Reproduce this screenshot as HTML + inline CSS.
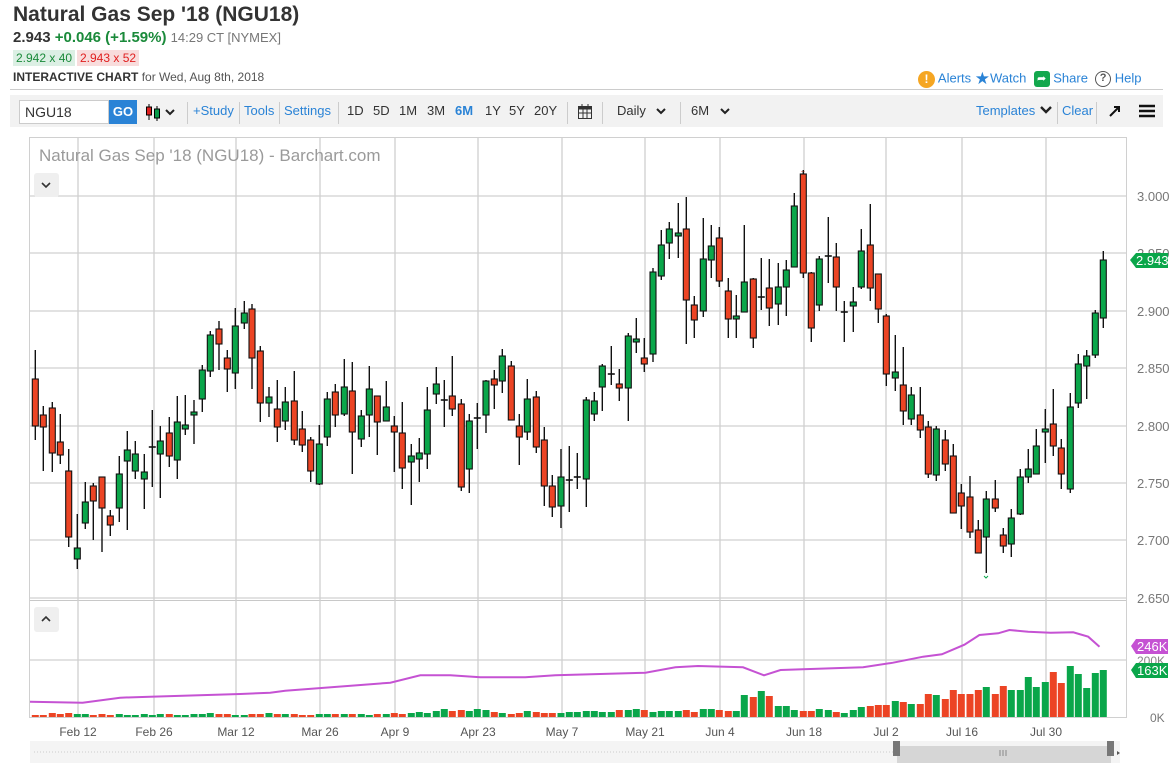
<!DOCTYPE html>
<html><head><meta charset="utf-8">
<style>
*{margin:0;padding:0;box-sizing:border-box}
body{width:1173px;height:768px;background:#fff;font-family:"Liberation Sans",sans-serif;position:relative;overflow:hidden;color:#333}
.a{position:absolute;white-space:nowrap}
.blue{color:#2a83d6}
.p{position:absolute;top:103px;font-size:13px}
</style></head><body>
<div class="a" style="left:13px;top:3px;font-size:21px;font-weight:bold;color:#333">Natural Gas Sep '18 (NGU18)</div>
<div class="a" style="left:13px;top:29px;font-size:15px"><b>2.943</b> <b style="color:#1a8a3a">+0.046 (+1.59%)</b> <span style="font-size:13px;color:#777">14:29 CT [NYMEX]</span></div>
<div class="a" style="left:13px;top:50px;font-size:12px;background:#dcefe4;color:#1a8a3a;padding:1px 3px">2.942 x 40</div>
<div class="a" style="left:77px;top:50px;font-size:12px;background:#f8dcdc;color:#e02020;padding:1px 3px">2.943 x 52</div>
<div class="a" style="left:13px;top:70px;font-size:12px"><b>INTERACTIVE CHART</b> <span style="color:#555">for Wed, Aug 8th, 2018</span></div>
<div class="a" style="left:918px;top:69px;font-size:13px">
<span style="display:inline-block;width:17px;height:17px;border-radius:50%;background:#f5a623;color:#fff;text-align:center;font-weight:bold;font-size:12px;line-height:17px;vertical-align:middle">!</span> <span class="blue">Alerts</span>
<span style="color:#2a83d6;font-size:17px;vertical-align:middle">★</span><span class="blue">Watch</span>
&nbsp;<span style="display:inline-block;width:16px;height:16px;border-radius:3px;background:#13a84d;color:#fff;text-align:center;font-size:11px;line-height:16px;vertical-align:middle">➦</span> <span class="blue">Share</span>
&nbsp;<span style="display:inline-block;width:16px;height:16px;border-radius:50%;border:1.5px solid #555;color:#555;text-align:center;font-size:11px;line-height:13px;vertical-align:middle;font-weight:bold">?</span> <span class="blue">Help</span></div>
<div class="a" style="left:10px;top:89px;width:1153px;height:1px;background:#ccc"></div>
<div class="a" style="left:10px;top:95px;width:1153px;height:32px;background:#f2f2f2"></div>
<div class="a" style="left:19px;top:100px;width:90px;height:24px;background:#fff;border:1px solid #ccc;font-size:14px;padding:3px 5px">NGU18</div>
<div class="a" style="left:109px;top:100px;width:28px;height:24px;background:#2a83d6;color:#fff;font-weight:bold;font-size:13px;text-align:center;line-height:24px">GO</div>
<svg class="a" style="left:144px;top:102px" width="34" height="20"><line x1="5" y1="2" x2="5" y2="18" stroke="#000"/><rect x="2.5" y="5" width="5" height="8" fill="#e02020" stroke="#000"/><line x1="13" y1="4" x2="13" y2="19" stroke="#000"/><rect x="10.5" y="7" width="5" height="9" fill="#0a9a4a" stroke="#000"/><path d="M22 8l4 4 4-4" fill="none" stroke="#222" stroke-width="2"/></svg>
<div class="a" style="left:187px;top:102px;width:1px;height:22px;background:#ccc"></div>
<div class="a blue" style="left:193px;top:103px;font-size:13px">+Study</div>
<div class="a" style="left:239px;top:102px;width:1px;height:22px;background:#ccc"></div>
<div class="a blue" style="left:244px;top:103px;font-size:13px">Tools</div>
<div class="a" style="left:279px;top:102px;width:1px;height:22px;background:#ccc"></div>
<div class="a blue" style="left:284px;top:103px;font-size:13px">Settings</div>
<div class="a" style="left:338px;top:102px;width:1px;height:22px;background:#ccc"></div>
<span class="p" style="left:347px">1D</span><span class="p" style="left:373px">5D</span><span class="p" style="left:399px">1M</span><span class="p" style="left:427px">3M</span><b class="p blue" style="left:455px">6M</b><span class="p" style="left:485px">1Y</span><span class="p" style="left:509px">5Y</span><span class="p" style="left:534px">20Y</span>
<div class="a" style="left:567px;top:102px;width:1px;height:22px;background:#ccc"></div>
<svg class="a" style="left:577px;top:103px" width="16" height="17"><rect x="1.5" y="3.5" width="13" height="12" fill="none" stroke="#333"/><rect x="1.5" y="3.5" width="13" height="3" fill="#333"/><path d="M5 1v4M11 1v4M1.5 10h13M6 6.5v9M10 6.5v9" stroke="#333"/></svg>
<div class="a" style="left:602px;top:102px;width:1px;height:22px;background:#ccc"></div>
<div class="a" style="left:617px;top:103px;font-size:13px">Daily</div>
<svg class="a" style="left:655px;top:106px" width="12" height="10"><path d="M2 3l4 4 4-4" fill="none" stroke="#222" stroke-width="2"/></svg>
<div class="a" style="left:680px;top:102px;width:1px;height:22px;background:#ccc"></div>
<div class="a" style="left:691px;top:103px;font-size:13px">6M</div>
<svg class="a" style="left:719px;top:106px" width="12" height="10"><path d="M2 3l4 4 4-4" fill="none" stroke="#222" stroke-width="2"/></svg>
<div class="a blue" style="left:976px;top:103px;font-size:13px">Templates</div>
<svg class="a" style="left:1039px;top:105px" width="14" height="10"><path d="M2 2l5 5 5-5" fill="none" stroke="#222" stroke-width="2.4"/></svg>
<div class="a" style="left:1057px;top:102px;width:1px;height:22px;background:#ccc"></div>
<div class="a blue" style="left:1062px;top:103px;font-size:13px">Clear</div>
<div class="a" style="left:1096px;top:102px;width:1px;height:22px;background:#ccc"></div>
<svg class="a" style="left:1107px;top:103px" width="16" height="16"><path d="M3 13L12 4M7 4h5v5" fill="none" stroke="#111" stroke-width="2"/></svg>
<svg class="a" style="left:1138px;top:103px" width="18" height="16"><path d="M1 3h16M1 8h16M1 13h16" stroke="#111" stroke-width="2.4"/></svg>

<svg id="ch" class="a" style="left:0;top:0" width="1173" height="768"></svg>
<div class="a" style="left:39px;top:146px;font-size:17px;color:#9a9a9a">Natural Gas Sep '18 (NGU18) - Barchart.com</div>
<div class="a" style="left:34px;top:173px;width:25px;height:24px;background:#efefef;border-radius:3px"></div>
<svg class="a" style="left:40px;top:180px" width="12" height="10"><path d="M2 3l4 4 4-4" fill="none" stroke="#333" stroke-width="1.6"/></svg>
<div class="a" style="left:34px;top:607px;width:25px;height:25px;background:#efefef;border-radius:3px"></div>
<svg class="a" style="left:40px;top:614px" width="12" height="10"><path d="M2 7l4-4 4 4" fill="none" stroke="#333" stroke-width="1.6"/></svg>
<script>
var C=[[35.3,350,379,426,440,0],[43.3,406,415,427,471,0],[52.3,402,408,453,472,0],[60.3,414,442,455,464,0],[68.7,449,471,537,547,0],[77.3,514,548,559,569,1],[85.3,482,502,523,529,1],[93.3,483,486,501,540,0],[102,477,477,508,552,0],[110.3,510,516,525,536,0],[119.3,456,474,508,522,1],[127.3,431,450,461,530,1],[135.3,441,454,471,479,1],[144.3,454,472,479,509,1],[152.3,410,447,447,487,2],[160.3,426,441,454,498,1],[169.3,417,433,456,467,0],[177.3,396,422,460,479,1],[185.3,395,425,429,435,1],[194,400,412,415,444,1],[202.3,365,370,399,412,1],[210.3,331,335,371,377,1],[219,321,329,344,370,0],[227.3,350,358,369,392,0],[235.3,308,326,373,389,1],[244.3,301,313,323,329,1],[252,304,309,358,389,0],[260.3,346,351,403,422,0],[269,387,397,403,417,1],[277.3,380,409,427,442,0],[285.3,387,402,421,430,1],[294.3,371,401,440,445,0],[302.3,411,429,445,452,0],[310.7,437,440,471,482,0],[319.3,425,444,484,485,1],[327.3,392,399,437,446,1],[335.3,384,392,415,427,0],[344.3,359,387,414,416,1],[352.3,362,391,432,474,0],[361.3,410,416,439,447,1],[369.3,366,389,415,437,1],[377.3,396,396,422,455,0],[386.3,381,407,421,421,1],[394.3,416,426,432,472,0],[402.3,402,433,468,489,0],[411.3,444,456,462,505,1],[419.3,438,453,459,482,1],[427.3,387,410,454,469,1],[436.3,367,384,394,404,1],[444.3,380,400,400,427,2],[452.3,356,396,409,416,0],[461.3,399,404,487,491,0],[469.3,414,421,469,493,1],[477.3,403,418,418,449,2],[486,380,381,415,433,1],[494.3,370,379,385,409,0],[502.3,349,356,381,393,1],[511.3,361,366,420,420,0],[519.3,414,426,437,465,0],[527.3,379,399,432,440,1],[536.3,391,397,447,453,0],[544.3,427,440,486,506,0],[552.3,475,486,507,517,0],[561,449,477,506,528,1],[569.3,446,480,480,512,2],[577.3,453,477,477,489,2],[586.3,397,400,479,507,1],[594.3,392,401,414,421,1],[602.3,364,366,387,411,1],[611.3,346,374,374,385,2],[619.3,369,384,388,401,0],[628.3,333,336,388,421,1],[636.3,318,339,342,353,1],[644.3,338,358,364,372,0],[653,268,272,354,362,1],[661.3,230,245,276,280,1],[669.3,222,229,243,259,1],[678.3,203,233,236,258,1],[686.3,197,229,300,344,0],[694.3,296,305,320,338,0],[703.3,218,259,311,317,1],[711.3,225,246,260,278,1],[719.3,227,238,281,287,0],[728.3,278,291,319,338,0],[736.3,295,316,319,338,1],[744.3,225,282,312,312,1],[753.3,278,279,338,348,0],[761.3,258,297,297,310,2],[769.3,259,288,308,326,0],[778.3,263,287,304,325,1],[786.3,260,270,287,316,1],[794.3,193,206,267,267,1],[803.3,170,174,273,278,0],[811.3,272,273,328,342,0],[819.3,256,259,305,311,1],[828.3,217,256,256,283,2],[836.3,243,257,287,311,0],[844.3,301,312,312,342,2],[853.3,287,302,306,332,1],[861.3,229,251,287,289,1],[870.3,204,245,288,301,0],[878.3,274,274,309,323,0],[886.3,314,316,374,386,0],[895.3,335,372,378,391,1],[903.3,347,385,411,425,0],[911.3,387,395,419,425,1],[920.3,387,415,430,438,0],[928.3,421,427,474,478,0],[936.3,426,429,475,481,1],[945.3,430,440,464,471,0],[953.3,444,456,513,513,0],[961.3,484,493,506,529,0],[970,476,497,532,538,0],[978.3,520,530,553,553,0],[986.3,491,499,537,573,1],[995.3,480,499,508,512,0],[1003.3,528,535,546,553,0],[1011.3,509,518,544,557,1],[1020.3,469,477,514,515,1],[1028.3,449,469,477,483,1],[1036.3,429,446,474,474,1],[1045.3,409,429,432,463,1],[1053.3,389,424,446,456,0],[1061.3,439,448,474,489,0],[1070.3,393,407,489,493,1],[1078.3,354,364,403,408,1],[1086.7,350,356,366,399,1],[1095.3,310,313,355,358,1],[1103.3,251,260,318,328,1]];
var V=[2,2,4,3,4,3,3,2,3,2,3,2,2,3,2,3,3,2,2,3,3,4,3,3,2,2,3,3,4,3,3,3,2,2,3,3,3,3,3,3,2,3,3,4,3,4,5,4,6,8,6,7,6,8,7,5,4,3,4,6,5,4,4,4,5,5,6,6,5,5,7,7,8,7,5,6,6,6,7,5,8,8,7,6,6,22,20,26,21,11,11,7,6,6,8,7,5,4,7,10,11,12,12,16,15,13,13,23,22,18,27,23,23,27,30,23,31,27,27,40,30,35,45,34,51,43,29,44,47];
var R='#ec4424',G='#0aa64a',s='';
s+='<rect x="29.5" y="137.5" width="1097" height="580" fill="none" stroke="#d0d0d0"/>';
[196,253,311,368,426,483,540,598].forEach(function(y){s+='<line x1="30" x2="1126" y1="'+y+'" y2="'+y+'" stroke="#d0d0d0" stroke-width="1.3"/>'});
s+='<line x1="30" x2="1126" y1="600.5" y2="600.5" stroke="#c8c8c8"/><line x1="30" x2="1126" y1="660" y2="660" stroke="#d0d0d0" stroke-width="1.3"/>';
var D=[[78,'Feb 12'],[154,'Feb 26'],[236,'Mar 12'],[320,'Mar 26'],[395,'Apr 9'],[478,'Apr 23'],[562,'May 7'],[645,'May 21'],[720,'Jun 4'],[804,'Jun 18'],[886,'Jul 2'],[962,'Jul 16'],[1046,'Jul 30']];
D.forEach(function(d){s+='<line x1="'+d[0]+'" x2="'+d[0]+'" y1="138" y2="717" stroke="#d0d0d0" stroke-width="1.3"/><text x="'+d[0]+'" y="736" font-size="12" fill="#555" text-anchor="middle" font-family="Liberation Sans">'+d[1]+'</text>'});
[['3.000',196],['2.950',253],['2.900',311],['2.850',368],['2.800',426],['2.750',483],['2.700',540],['2.650',598]].forEach(function(p){s+='<text x="1137" y="'+(p[1]+5)+'" font-size="13" fill="#777" font-family="Liberation Sans">'+p[0]+'</text>'});
C.forEach(function(c,i){var x=c[0],col=c[5]==0?R:G;var h=V[i]||3;s+='<rect x="'+(x-3.5)+'" y="'+(717-h)+'" width="7" height="'+h+'" fill="'+col+'"/>';});
C.forEach(function(c){var x=c[0];s+='<line x1="'+x+'" x2="'+x+'" y1="'+c[1]+'" y2="'+c[4]+'" stroke="#111" stroke-width="1.4"/>';if(c[5]==2){s+='<line x1="'+(x-3.5)+'" x2="'+(x+3.5)+'" y1="'+c[2]+'" y2="'+c[2]+'" stroke="#111" stroke-width="1.6"/>'}else{s+='<rect x="'+(x-3)+'" y="'+c[2]+'" width="6" height="'+Math.max(2,c[3]-c[2])+'" fill="'+(c[5]?G:R)+'" stroke="#111" stroke-width="1.1"/>'}});
var M=[[40,305],[110,308],[160,293],[200,290],[320,282],[360,278],[380,272],[520,248],[560,226],[600,226],[640,232],[700,232],[740,226],[860,218],[900,202],[930,198],[990,202],[1018,226],[1040,210],[1150,202],[1190,188],[1230,170],[1255,163],[1285,134],[1305,105],[1330,100],[1345,90],[1370,95],[1400,98],[1430,97],[1450,110],[1465,140]];
s+='<polyline fill="none" stroke="#c552d3" stroke-width="2" points="'+M.map(function(m){return (m[0]*0.7505).toFixed(1)+','+(600+m[1]/3).toFixed(1)}).join(' ')+'"/>';
s+='<path d="M1130 260l6-7h32v15h-32z" fill="#0aa64a"/><text x="1136" y="265" font-size="13" fill="#fff" font-family="Liberation Sans">2.943</text>';
s+='<text x="1137" y="665" font-size="12" fill="#888" font-family="Liberation Sans">200K</text>';
s+='<path d="M1131 646l5-7h32v15h-32z" fill="#c552d3"/><text x="1137" y="651" font-size="13" fill="#fff" font-family="Liberation Sans">246K</text>';
s+='<path d="M1131 670l5-7h32v15h-32z" fill="#0aa64a"/><text x="1137" y="675" font-size="13" fill="#fff" font-family="Liberation Sans">163K</text>';
s+='<text x="1150" y="722" font-size="12" fill="#777" font-family="Liberation Sans">0K</text>';
s+='<rect x="30" y="741" width="1090" height="22" fill="#f4f4f4"/><line x1="34" x2="894" y1="752" y2="752" stroke="#ccc" stroke-dasharray="1 2"/><rect x="897" y="746" width="214" height="17" fill="#d6d6d6"/><rect x="893" y="741" width="7" height="15" fill="#777"/><rect x="1107" y="741" width="7" height="15" fill="#777"/><path d="M1000 750v6M1003 750v6M1006 750v6" stroke="#888"/><path d="M1117 751l3 2-3 2z" fill="#555"/>';
s+='<text x="803" y="172" font-size="8" fill="#ec4424" text-anchor="middle">..</text><path d="M984 576l2 2 2-2" stroke="#0aa64a" fill="none"/>';
document.getElementById('ch').innerHTML=s;
</script>
</body></html>
